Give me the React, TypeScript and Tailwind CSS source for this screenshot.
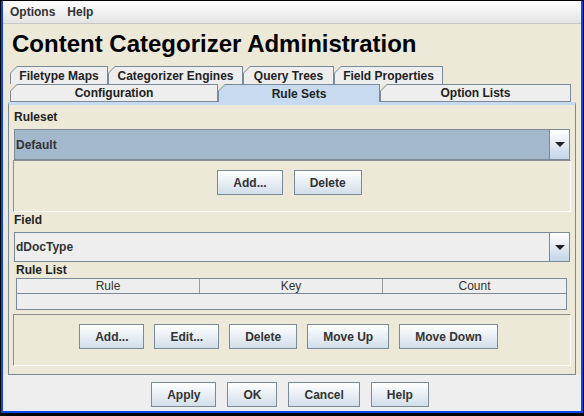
import React from "react";

function Btn({ label }: { label: string }) {
  return (
    <button className="h-[25px] px-[15px] border border-[#7a8a99] bg-linear-to-b from-white to-[#d2deea] text-[12px] leading-[14px] font-bold text-[#333]">
      {label}
    </button>
  );
}

function Tab({
  label,
  w,
  selected,
  lined,
}: {
  label: string;
  w: string;
  selected?: boolean;
  lined?: boolean;
}) {
  return (
    <div
      className={`${w} h-full bg-[#7a8a99] pt-px px-px ${lined ? "pb-px" : ""} [clip-path:polygon(0_7px,7px_0,100%_0,100%_100%,0_100%)]`}
    >
      <div
        className={`h-full flex items-center justify-center text-[12px] font-bold text-[#222] [clip-path:polygon(0_6px,6px_0,100%_0,100%_100%,0_100%)] ${
          selected ? "bg-[#c8daf0]" : "bg-[#eeeeee]"
        }`}
      >
        {label}
      </div>
    </div>
  );
}

function Combo({ value, bg, h }: { value: string; bg: string; h: string }) {
  return (
    <div className={`mx-px ${h} flex border border-[#7a8a99] ${bg}`}>
      <div className="flex-1 flex items-center pl-px text-[12px] font-bold text-[#333]">
        {value}
      </div>
      <div className="w-[20px] border-l border-[#7a8a99] bg-linear-to-b from-white to-[#c5d5e8] flex items-center justify-center">
        <svg width="10" height="5" viewBox="0 0 10 5">
          <path d="M0 0h10L5 5z" fill="#222" />
        </svg>
      </div>
    </div>
  );
}

export default function App() {
  return (
    <div className="w-[584px] h-[416px] bg-black pt-px px-px pb-[3px] font-['Liberation_Sans',Arial,sans-serif] text-[#222]">
      <div className="h-full border-x-2 border-b-2 border-[#0a48ec] bg-[#ece9d8] flex flex-col">
        {/* menu */}
        <div className="h-[23px] shrink-0 flex items-center gap-[12px] pl-[7px] bg-linear-to-b from-white to-[#e4e4e4] border-b border-[#c6c6c6] text-[12px] font-bold text-[#333]">
          <span>Options</span>
          <span>Help</span>
        </div>

        <div className="h-[42px] shrink-0 pl-[9px] pt-[6px] text-[24px] leading-[28px] font-bold text-black">
          Content Categorizer Administration
        </div>

        {/* tabs */}
        <div className="h-[18px] shrink-0 flex pl-[7px]">
          <Tab label="Filetype Maps" w="w-[98px]" />
          <Tab label="Categorizer Engines" w="w-[135px]" />
          <Tab label="Query Trees" w="w-[91px]" />
          <Tab label="Field Properties" w="w-[109px]" />
        </div>
        <div className="h-[18px] shrink-0 flex pl-[7px]">
          <Tab label="Configuration" w="w-[208px]" lined />
          <Tab label="Rule Sets" w="w-[162px]" selected />
          <Tab label="Option Lists" w="w-[191px]" lined />
        </div>

        {/* panel */}
        <div className="ml-[5px] w-[568px] h-[273px] shrink-0 border-x border-b border-[#7a8a99] border-t-[3px] border-t-[#c8daf0] pl-[4px] pr-[4px] flex flex-col">
          <div className="h-[24px] leading-[24px] pl-px text-[12px] font-bold">Ruleset</div>
          <Combo value="Default" bg="bg-[#a3b8cc]" h="h-[31px]" />
          <div className="h-[52px] border-t border-l border-[#8d8d8d] border-r border-b border-r-white border-b-white flex justify-center gap-[11px] pt-[9px] pr-[5px]">
            <Btn label="Add..." />
            <Btn label="Delete" />
          </div>

          <div className="h-[20px] leading-[16px] pl-px text-[12px] font-bold">Field</div>
          <Combo value="dDocType" bg="bg-[#eeeeee]" h="h-[30px]" />

          <div className="h-[16px] leading-[16px] pl-[3px] text-[12px] font-bold">Rule List</div>
          <div className="ml-[3px] w-[551px] border border-[#7a8a99] bg-[#eeeeee]">
            <div className="h-[15px] grid grid-cols-3 border-b border-[#7a8a99] text-[12px] leading-[14px] text-[#333]">
              <div className="text-center border-r border-[#9a9a9a]">Rule</div>
              <div className="text-center border-r border-[#9a9a9a]">Key</div>
              <div className="text-center">Count</div>
            </div>
            <div className="h-[15px]" />
          </div>

          <div className="mt-[4px] h-[52px] border-t border-l border-[#8d8d8d] border-r border-b border-r-white border-b-white flex justify-center gap-[10px] pt-[9px] pr-[7px]">
            <Btn label="Add..." />
            <Btn label="Edit..." />
            <Btn label="Delete" />
            <Btn label="Move Up" />
            <Btn label="Move Down" />
          </div>
        </div>

        {/* dialog buttons */}
        <div className="flex-1 bg-[#eeeeee] flex justify-center gap-[11px] pt-[7px] pr-[4px]">
          <Btn label="Apply" />
          <Btn label="OK" />
          <Btn label="Cancel" />
          <Btn label="Help" />
        </div>
      </div>
    </div>
  );
}
